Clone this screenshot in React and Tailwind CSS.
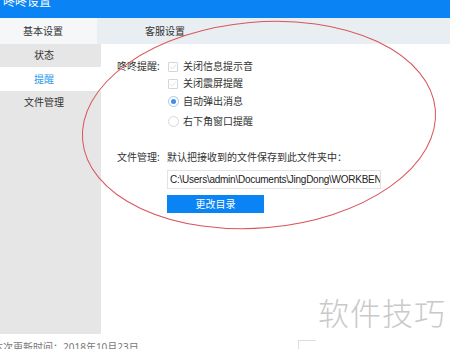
import React from 'react';

const font = { fontFamily: '"Noto Sans", "Noto Sans CJK SC", sans-serif' };

const CheckBox = () => (
  <span className="w-[10px] h-[10px] border border-[#d3d6da] rounded-[1px] bg-white flex items-center justify-center">
    <svg width="8" height="8" viewBox="0 0 8 8">
      <path d="M1.2 4 L3.2 6 L6.8 2" fill="none" stroke="#e1e3e6" strokeWidth="1" />
    </svg>
  </span>
);

const Radio = ({ on }) => (
  <span className={`w-[11px] h-[11px] rounded-full border flex items-center justify-center bg-white ${on ? 'border-[#a9c6e8]' : 'border-[#d6d9dc]'}`}>
    {on && <span className="w-[5px] h-[5px] rounded-full bg-[#3d8fe8]" />}
  </span>
);

export default function App() {
  return (
    <div className="relative w-[450px] h-[349px] overflow-hidden bg-white" style={font}>
      <div className="h-[18px] bg-[#0a84f5] overflow-hidden">
        <div className="text-white text-[12px] leading-[16px] pl-[3px] -mt-[6px]">咚咚设置</div>
      </div>

      <div className="flex h-[26px] text-[10px] text-[#333]">
        <div className="w-[97px] bg-[#f5f7f9] flex items-center pl-[23px]">基本设置</div>
        <div className="flex-1 bg-[#e9eef2] flex items-center pl-[48px]">客服设置</div>
      </div>

      <div className="flex">
        <div className="w-[101px] h-[290px] bg-[#e6e6e6] text-[10px] text-[#333]">
          <div className="h-[23px] flex items-center justify-center pr-[13px]">状态</div>
          <div className="h-[24px] flex items-center justify-center pr-[13px] bg-white text-[#2f9bea]">提醒</div>
          <div className="h-[23px] flex items-center justify-center pr-[13px]">文件管理</div>
        </div>

        <div className="flex-1 pl-[16px] pt-[14px] text-[10px] text-[#333]">
          <div className="flex">
            <div className="w-[51px] h-[17px] flex items-center">咚咚提醒:</div>
            <div className="flex flex-col">
              <div className="h-[17px] flex items-center gap-[5px]">
                <CheckBox />
                <span>关闭信息提示音</span>
              </div>
              <div className="h-[17px] flex items-center gap-[5px]">
                <CheckBox />
                <span>关闭震屏提醒</span>
              </div>
              <div className="h-[19px] flex items-center gap-[4px]">
                <Radio on />
                <span>自动弹出消息</span>
              </div>
              <div className="h-[21px] flex items-center gap-[4px]">
                <Radio />
                <span>右下角窗口提醒</span>
              </div>
            </div>
          </div>

          <div className="flex mt-[17px]">
            <div className="w-[50px] h-[17px] flex items-center shrink-0">文件管理:</div>
            <div className="flex flex-col">
              <div className="h-[17px] flex items-center">默认把接收到的文件保存到此文件夹中：</div>
              <div className="mt-[4px] w-[214px] h-[19px] border border-[#e3e3e3] overflow-hidden whitespace-nowrap text-[10px] tracking-[-0.25px] leading-[17px] pl-[2px] text-[#222]" style={{ fontFamily: '"Liberation Sans", sans-serif' }}>
                C:\Users\admin\Documents\JingDong\WORKBENCH
              </div>
              <div className="mt-[6px] w-[97px] h-[18px] bg-[#0a84f5] text-white text-[10px] flex items-center justify-center">
                更改目录
              </div>
            </div>
          </div>
        </div>
      </div>

      <div className="text-[10px] leading-[14px] text-[#777] -ml-[7px] mt-[6px] whitespace-nowrap">本次更新时间：2018年10月23日</div>

      <div className="absolute left-[318px] top-[296px] text-[31px] text-[#c9c9c9] leading-none tracking-[1px]" style={{ fontFamily: '"Noto Sans CJK SC", sans-serif', fontWeight: 300 }}>
        软件技巧
      </div>
      <div className="absolute left-[298px] top-[340px] w-[18px] h-[12px] border-t border-l border-[#dddddd]" />

      <svg className="absolute left-0 top-0 pointer-events-none" width="450" height="349">
        <ellipse cx="259" cy="125" rx="177" ry="103" fill="none" stroke="#d9545a" strokeWidth="1" transform="rotate(-5 259 125)" />
      </svg>
    </div>
  );
}
